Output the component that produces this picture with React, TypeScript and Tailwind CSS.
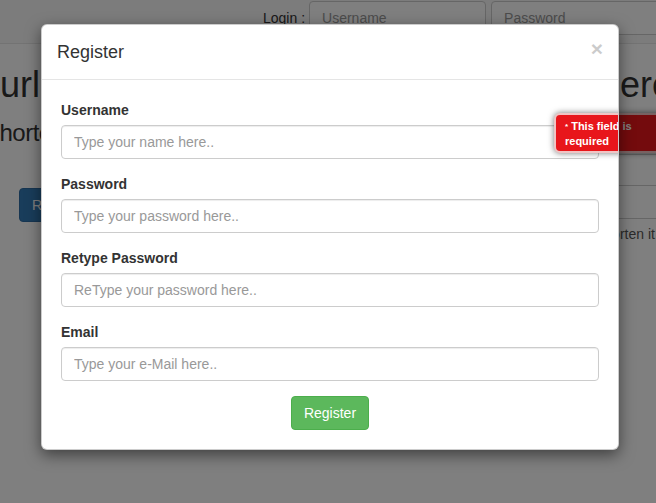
import React from "react";

const font = "font-['Liberation_Sans',Arial,Helvetica,sans-serif]";

function Tooltip({ className = "" }: { className?: string }) {
  return (
    <div
      className={`absolute w-[122px] h-[40px] rounded-[6px] border-2 border-[#f0c4c4] bg-[#e8161b] shadow-[0_0_6px_rgba(0,0,0,0.55)] px-[9px] pt-[4px] text-white text-[11px] leading-[15px] font-bold ${className}`}
    >
      <span className="text-[8px] align-top">*</span> This field is
      <br />
      required
    </div>
  );
}

function Field({ label, placeholder }: { label: string; placeholder: string }) {
  return (
    <div className="mb-[15px]">
      <label className="block mb-[5px] text-[14px] leading-[20px] font-bold text-[#333]">{label}</label>
      <input
        placeholder={placeholder}
        className="block w-full h-[34px] px-[12px] rounded-[4px] border border-[#ccc] text-[14px] text-[#555] placeholder:text-[#999] shadow-[inset_0_1px_1px_rgba(0,0,0,0.075)] outline-none bg-white"
      />
    </div>
  );
}

export default function App() {
  return (
    <div className={`relative w-[656px] h-[503px] overflow-hidden bg-white text-[#333] ${font}`}>
      {/* background page */}
      <nav className="h-[44px] bg-[#f8f8f8] border-b border-[#e7e7e7] flex items-start pl-[263px] pt-[1px] whitespace-nowrap">
        <span className="text-[14px] leading-[34px] mr-[4px]">Login :</span>
        <input
          placeholder="Username"
          className="w-[177px] h-[34px] px-[12px] rounded-[4px] border border-[#ccc] text-[14px] placeholder:text-[#999] bg-white shrink-0"
        />
        <input
          placeholder="Password"
          className="ml-[5px] w-[177px] h-[34px] px-[12px] rounded-[4px] border border-[#ccc] text-[14px] placeholder:text-[#999] bg-white shrink-0"
        />
      </nav>
      <div className="mt-[21px] flex justify-between text-[36px] leading-[40px] whitespace-nowrap">
        <span>url</span>
        <span className="mr-[-16px]">ere</span>
      </div>
      <div className="flex justify-between items-start">
        <div className="flex flex-col items-start">
          <div className="mt-[13px] ml-[-16px] text-[24px] leading-[30px] tracking-[-0.5px] whitespace-nowrap">Shorten your url</div>
          <button className="mt-[40px] ml-[19px] h-[34px] px-[12px] rounded-[4px] bg-[#337ab7] border border-[#2e6da4] text-white text-[14px]">
            Register
          </button>
        </div>
        <div className="w-[200px] mr-[-100px] shrink-0 flex flex-col">
          <div className="mt-[16px] h-[34px] rounded-[4px] border border-[#ccc] bg-white" />
          <div className="mt-[30px] h-[34px] rounded-[4px] border border-[#ccc] bg-white" />
          <div className="mt-[5px] pl-[39px] text-[14px] leading-[20px] text-[#555] whitespace-nowrap">Shorten it by</div>
        </div>
      </div>

      <Tooltip className="left-[554px] top-[113px]" />

      {/* backdrop */}
      <div className="absolute inset-0 bg-black/50" />

      {/* modal */}
      <div className="absolute left-[41px] top-[24px] w-[578px] bg-white rounded-[6px] overflow-hidden border border-black/20 shadow-[0_5px_15px_rgba(0,0,0,0.5)]">
        <div className="flex justify-between items-start px-[15px] pt-[14px] pb-[14px] border-b border-[#e5e5e5]">
          <h4 className="text-[18px] leading-[26px] text-[#333]">Register</h4>
          <span className="mt-[-1px] text-[21px] leading-[21px] font-bold text-black opacity-20">×</span>
        </div>
        <div className="px-[19px] pt-[20px] pb-[19px]">
          <Field label="Username" placeholder="Type your name here.." />
          <Field label="Password" placeholder="Type your password here.." />
          <Field label="Retype Password" placeholder="ReType your password here.." />
          <Field label="Email" placeholder="Type your e-Mail here.." />
          <div className="flex justify-center">
            <button className="h-[34px] px-[12px] rounded-[4px] bg-[#5cb85c] border border-[#4cae4c] text-white text-[14px] leading-[20px]">
              Register
            </button>
          </div>
        </div>
        <Tooltip className="left-[512px] top-[88px]" />
      </div>
    </div>
  );
}
